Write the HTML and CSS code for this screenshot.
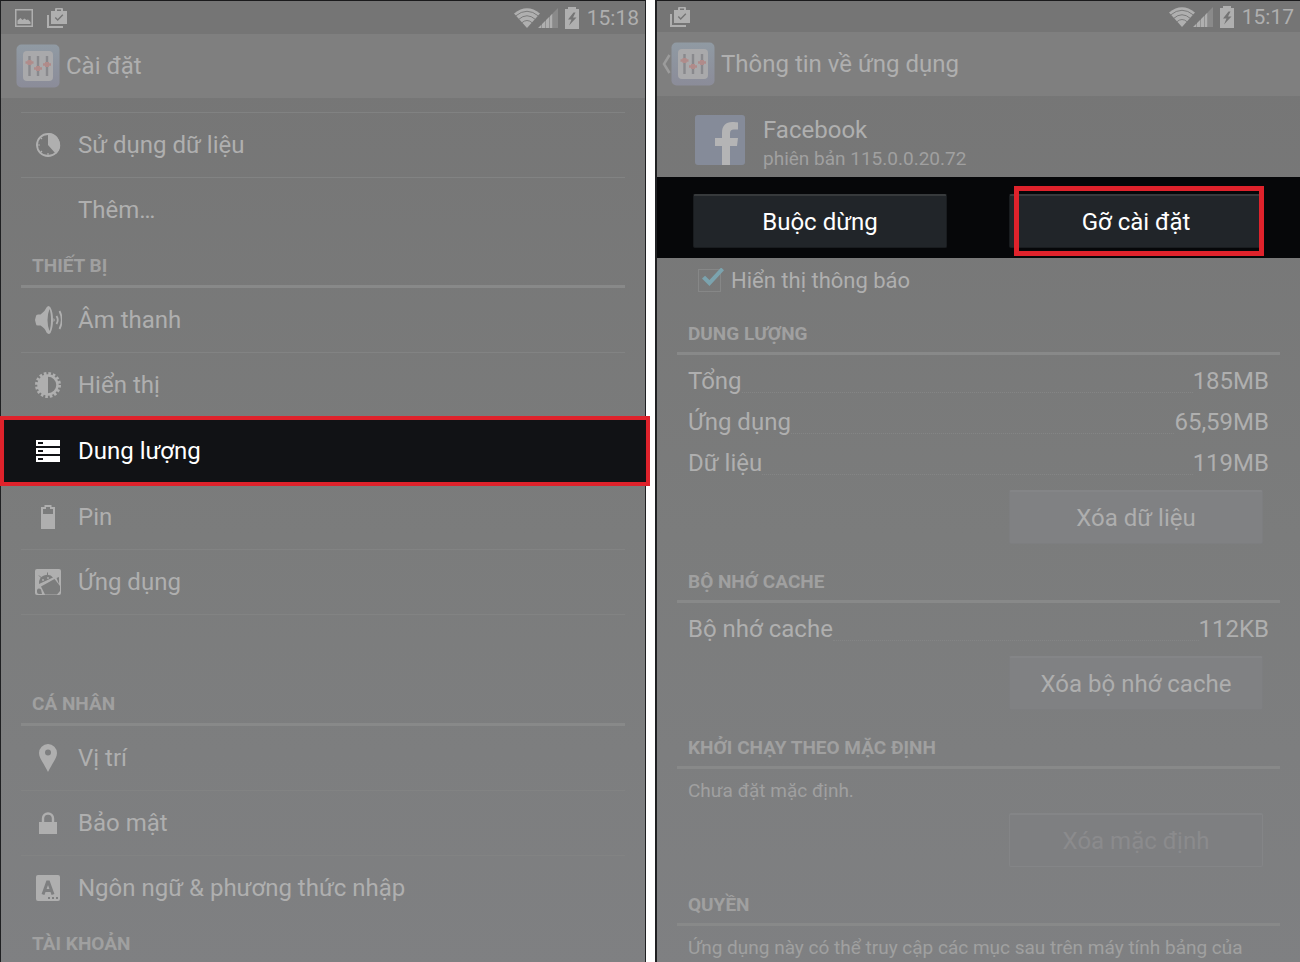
FILE: index.html
```html
<!DOCTYPE html>
<html lang="vi">
<head>
    <meta charset="utf-8">
    <title>Cài đặt</title>
    <link rel="stylesheet" href="styles.css">
</head>
<body>
    <!-- shared icons -->
    <svg class="sprite" width="0" height="0" aria-hidden="true">
        <symbol id="i-store" viewBox="0 0 22 22">
            <path fill="currentColor" d="M1 8h2v11h14v2H1z"/>
            <path fill="currentColor" fill-rule="evenodd" d="M5 4h4V2q0-1 1-1h6q1 0 1 1v2h4v13H5zM11 4h4V2.500h-4zM9.800 10l-1 1 2.900 2.900 5.600-5.700-1-1-4.600 4.700z"/>
        </symbol>
        <symbol id="i-wifi" viewBox="0 0 26 20">
            <path fill="currentColor" d="M0 5.500Q13-5 26 5.500L13 20z"/>
            <path fill="none" stroke="#757575" stroke-width=".9" d="M1.500 8Q13-1.500 24.500 8M4.500 11.500Q13 4 21.500 11.500M7.500 15Q13 10 18.500 15"/>
        </symbol>
        <symbol id="i-signal" viewBox="0 0 20 20">
            <path fill="currentColor" d="M0 20l3.500-3.500V20zM4 20v-4l3.500-3.500V20zM8 20v-8l3.500-3.500V20zM12 20V8l2.500-2.500V20z"/>
            <path fill="#8a8a8a" d="M15 20V5l5-5v20z"/>
        </symbol>
        <symbol id="i-charge" viewBox="0 0 14 22">
            <path fill="currentColor" fill-rule="evenodd" d="M0 2h3V0h8v2h3v20H0zM8.500 5.500L3 12.500h3.500L4 18.500l7.500-8H8l2.500-5z"/>
        </symbol>
        <symbol id="i-settings" viewBox="0 0 44 44">
            <linearGradient id="g-tile" x1="0" y1="0" x2="0" y2="1">
                <stop offset="0" stop-color="#909aa3"/>
                <stop offset="1" stop-color="#8b8c99"/>
            </linearGradient>
            <rect x=".5" y=".5" width="43" height="43" rx="5" fill="url(#g-tile)"/>
            <rect x="7" y="7" width="30" height="30" rx="4" fill="#a9a9ab"/>
            <path stroke="#89898d" stroke-width="2.400" d="M13.500 12v20M22 12v20M31 12v20"/>
            <path stroke="#b08b8a" stroke-width="2.400" d="M9.500 18.500h8M18 24.500h8M27 20.500h8"/>
            <path fill="#b08b8a" d="M11.500 16h4v5h-4zM20 22h4v5h-4zM29 18h4v5h-4z"/>
        </symbol>
    </svg>

    <div class="screens">
        <section class="phone phone-settings">
            <div class="status">
                <svg class="i-image" viewBox="0 0 18 18"><path fill="none" stroke="currentColor" stroke-width="1.500" d="M.75.75h16.500v16.500H.75z"/><path fill="currentColor" d="M2.500 15v-3.500l3-2.500 2 2 2-1.500 2 1.500 1.500-.5 2.500 2.500V15z"/></svg>
                <svg class="i-store"><use href="#i-store"/></svg>
                <span class="space"></span>
                <svg class="i-wifi"><use href="#i-wifi"/></svg>
                <svg class="i-signal"><use href="#i-signal"/></svg>
                <svg class="i-charge"><use href="#i-charge"/></svg>
                <time>15:18</time>
            </div>
            <header class="bar">
                <svg class="i-settings"><use href="#i-settings"/></svg>
                <h1>Cài đặt</h1>
            </header>

            <nav class="list">
                <ul class="group first">
                    <li><a href="#data">
                        <svg viewBox="0 0 28 28"><circle cx="14" cy="14" r="11" fill="none" stroke="currentColor" stroke-width="1.800"/><path fill="currentColor" d="M14 14V2a12 12 0 0 1 8 21z"/><path stroke="currentColor" stroke-width="1.200" d="M2 14h4M14 22v4M6 6l2 2M6 22l2-2"/></svg>
                        Sử dụng dữ liệu</a></li>
                    <li><a href="#more"><svg viewBox="0 0 28 28"></svg>Thêm…</a></li>
                </ul>

                <h2>THIẾT BỊ</h2>
                <ul class="group">
                    <li><a href="#sound">
                        <svg viewBox="0 0 28 28"><path fill="currentColor" fill-rule="evenodd" d="M2 10q0-1.500 2-1.500h2.500Q11 5.500 12.500 1.500q2-3 4 0Q19 6 19 14t-2.500 13q-2 2-4-.5-1.500-4.500-6-7H4q-2 0-2-1.500L1 14zM15.500 3Q13.500 8 13.500 14t2 11q1.500-4 1.500-11t-1.500-11z"/><path fill="currentColor" d="M19.500 12q2.500 2 0 4z"/><path fill="none" stroke="currentColor" stroke-width="1.800" d="M22.500 10q2.500 4 0 8M25.500 5q4.500 9 0 18"/></svg>
                        Âm thanh</a></li>
                    <li><a href="#display">
                        <svg viewBox="0 0 28 28"><circle cx="14" cy="14" r="11.500" fill="none" stroke="currentColor" stroke-width="3" stroke-dasharray="2.600 1.916"/><circle cx="14" cy="14" r="9.500" fill="none" stroke="currentColor" stroke-width="2.500"/><path fill="currentColor" d="M14 4v20a10 10 0 0 1 0-20z"/></svg>
                        Hiển thị</a></li>
                    <li class="active"><a href="#storage">
                        <svg viewBox="0 0 28 28"><path fill="currentColor" fill-rule="evenodd" d="M2 3h24v6H2zM4 5v2h5V5zM2 11h24v6H2zM4 13v2h5v-2zM2 19h24v6H2zM4 21v2h5v-2z"/></svg>
                        Dung lượng</a></li>
                    <li><a href="#battery">
                        <svg viewBox="0 0 28 28"><path fill="currentColor" fill-rule="evenodd" d="M7 4h3.500V2h7v2H21v22H7zM9 6v5h10V6h-3V4h-4v2z"/></svg>
                        Pin</a></li>
                    <li class="line"><a href="#apps">
                        <svg viewBox="0 0 28 28"><rect x="1" y="1" width="26" height="26" rx="2" fill="currentColor"/><g fill="#7c7d7d"><path d="M5 16Q4.500 9.500 10 7.500q6-2 9 2zM7 18.500L20.500 11 26 18v5l-3 3.500H11z"/><path d="M3 22q1.500-2.500 4-.5l1 4.500H5q-2 0-2-2zM22.500 10l2.500-1v7z"/></g><path stroke="#7c7d7d" stroke-width="1" d="M5 7.500L7.500 10M13.500 4.500V8"/><circle cx="9" cy="12" r=".9" fill="currentColor"/><circle cx="14" cy="10" r=".9" fill="currentColor"/></svg>
                        Ứng dụng</a></li>
                </ul>

                <h2 class="spaced">CÁ NHÂN</h2>
                <ul class="group">
                    <li><a href="#location">
                        <svg viewBox="0 0 28 28"><path fill="currentColor" fill-rule="evenodd" d="M14 0a9 9 0 0 1 9 9c0 5-4 9-9 19C9 18 5 14 5 9a9 9 0 0 1 9-9zM14 5.500a3 3 0 1 0 0 6 3 3 0 0 0 0-6z"/></svg>
                        Vị trí</a></li>
                    <li><a href="#security">
                        <svg viewBox="0 0 28 28"><path fill="currentColor" d="M5 13h18v12H5z"/><path fill="none" stroke="currentColor" stroke-width="2.400" d="M9 14V9.500a5 5 0 0 1 10 0V14"/></svg>
                        Bảo mật</a></li>
                    <li><a href="#language">
                        <svg viewBox="0 0 28 28"><rect x="2" y="1" width="24" height="26" rx="2" fill="currentColor"/><path fill="none" stroke="#7e7f80" stroke-width="3" d="M9 20.500L13.500 8h1L19 20.500M10.500 16.500h7"/><path fill="#7e7f80" d="M14 23h2v2h-2zM18 23h2v2h-2zM22 23h2v2h-2z"/></svg>
                        Ngôn ngữ &amp; phương thức nhập</a></li>
                </ul>

                <h2>TÀI KHOẢN</h2>
            </nav>
        </section>

        <section class="phone phone-app">
            <div class="status">
                <svg class="i-store"><use href="#i-store"/></svg>
                <span class="space"></span>
                <svg class="i-wifi"><use href="#i-wifi"/></svg>
                <svg class="i-signal"><use href="#i-signal"/></svg>
                <svg class="i-charge"><use href="#i-charge"/></svg>
                <time>15:17</time>
            </div>
            <header class="bar">
                <a class="back" href="#back" aria-label="Cài đặt">
                    <svg class="i-back" viewBox="0 0 10 20"><path fill="none" stroke="#9c9c9c" stroke-width="2.500" d="M8.500 1L3 10l5.500 9"/></svg>
                    <svg class="i-settings"><use href="#i-settings"/></svg>
                </a>
                <h1>Thông tin về ứng dụng</h1>
            </header>

            <div class="app">
                <svg class="app-logo" viewBox="0 0 50 50"><rect width="50" height="50" rx="3" fill="#858b99"/><path fill="#b4b4b5" d="M27 50V31h-7v-8h7v-5c0-7.500 4-11 10-11 3 0 5 .2 6 .5v7h-4c-3 0-4 1.500-4 4V23h8l-1 8h-7v19z"/></svg>
                <div class="app-text">
                    <p class="app-name">Facebook</p>
                    <p class="app-version">phiên bản 115.0.0.20.72</p>
                </div>
            </div>

            <div class="actions">
                <button type="button">Buộc dừng</button>
                <div class="marked"><button type="button">Gỡ cài đặt</button></div>
            </div>

            <div class="notify">
                <input type="checkbox" id="notify" checked>
                <label for="notify">Hiển thị thông báo</label>
            </div>

            <div class="info">
                <h2>DUNG LƯỢNG</h2>
                <dl>
                    <div><dt>Tổng</dt><dd>185MB</dd></div>
                    <div><dt>Ứng dụng</dt><dd>65,59MB</dd></div>
                    <div><dt>Dữ liệu</dt><dd>119MB</dd></div>
                </dl>
                <button type="button">Xóa dữ liệu</button>

                <h2>BỘ NHỚ CACHE</h2>
                <dl>
                    <div><dt>Bộ nhớ cache</dt><dd>112KB</dd></div>
                </dl>
                <button type="button">Xóa bộ nhớ cache</button>

                <h2>KHỞI CHẠY THEO MẶC ĐỊNH</h2>
                <p>Chưa đặt mặc định.</p>
                <button type="button" disabled>Xóa mặc định</button>

                <h2>QUYỀN</h2>
                <p>Ứng dụng này có thể truy cập các mục sau trên máy tính bảng của</p>
            </div>
        </section>
    </div>
</body>
</html>
```
FILE: styles.css
```css
* {
    box-sizing: border-box;
}

body {
    margin: 0;
    background-color: #fff;
    color: #afafaf;
    font-family: Roboto, "Noto Sans", sans-serif;
    font-size: 24px;
}

h1, h2, p, ul, dl, dd {
    margin: 0;
    padding: 0;
}

a {
    color: inherit;
    text-decoration: none;
}

svg {
    display: block;
    flex: none;
}

.sprite {
    position: absolute;
}

.screens {
    display: grid;
    grid-template-columns: 646fr 645fr;
    gap: 9px;
    height: 100vh;
    overflow: hidden;
}

.phone {
    min-width: 0;
    background-image: linear-gradient(to bottom, #757575, #7b7c7c 55%, #7f8082);
    border-top: 1px solid #1a1a1c;
}

.phone-settings {
    border-left: 1px solid #1f2022;
    border-right: 1px solid #1f2022;
}

.phone-app {
    border-left: 2px solid #1f2022;
}

/* Status bar */
.status {
    display: flex;
    align-items: center;
    height: 33px;
    padding: 0 6px 0 14px;
    background-color: #757575;
}

.phone-app .status {
    height: 31px;
    padding-left: 12px;
}

.status time {
    margin-left: 8px;
    font-size: 21px;
}

.space {
    flex: 1;
}

.i-image {
    width: 18px;
    height: 18px;
    margin-right: 13px;
}

.i-store {
    width: 22px;
    height: 22px;
}

.i-wifi {
    width: 26px;
    height: 20px;
}

.i-signal {
    width: 20px;
    height: 20px;
    margin-left: -2px;
}

.i-charge {
    width: 14px;
    height: 22px;
    margin-left: 7px;
}

/* Action bar */
.bar {
    display: flex;
    align-items: center;
    gap: 6px;
    height: 64px;
    padding-left: 15px;
    background-color: #7f7f7f;
}

.phone-app .bar {
    padding-left: 4px;
}

.bar h1 {
    font-size: 24px;
    font-weight: 400;
}

.back {
    display: flex;
    align-items: center;
}

.i-back {
    width: 10px;
    height: 20px;
}

.i-settings {
    width: 44px;
    height: 44px;
}

/* Section titles */
h2 {
    height: 44px;
    padding-left: 11px;
    border-bottom: 3px solid #888989;
    color: #a0a0a0;
    font-size: 19px;
    font-weight: 700;
    line-height: 46px;
}

/* Settings list */
.list {
    padding: 0 20px;
}

.list h2 {
    height: 45px;
}

.group {
    list-style: none;
}

.group.first {
    margin-top: 14px;
    border-top: 1px solid #818282;
}

.group li {
    position: relative;
    height: 65px;
    border-bottom: 1px solid #828383;
}

.group li:last-child:not(.line) {
    border-bottom-color: transparent;
}

.group a {
    position: relative;
    display: flex;
    align-items: center;
    gap: 16px;
    height: 100%;
    padding-left: 13px;
}

.group svg {
    width: 28px;
    height: 28px;
}

.group .active {
    height: 67px;
    color: #fff;
}

/* frame runs over both edges of the screen */
.group .active::before {
    content: "";
    position: absolute;
    inset: -2px -25px -2px -21px;
    background-color: #111215;
    border: 4px solid #df222b;
}

.spaced {
    margin-top: 66px;
}

/* App details */
.app {
    display: flex;
    align-items: center;
    gap: 18px;
    height: 81px;
    padding: 6px 38px 0;
}

.app-logo {
    width: 50px;
    height: 50px;
}

.app-text {
    padding-top: 8px;
}

.app-name {
    line-height: 30px;
}

.app-version {
    color: #a0a0a0;
    font-size: 19px;
    line-height: 28px;
}

button {
    height: 54px;
    padding: 0;
    background-color: #808183;
    border: 1px solid #7d7e80;
    border-top: 2px solid #848587;
    border-radius: 2px;
    color: #aeaeae;
    font-family: inherit;
    font-size: 24px;
}

button:disabled {
    border-color: #848587;
    background-color: #7e7f81;
    color: #8b8b8d;
}

.actions {
    display: grid;
    grid-template-columns: 1fr 1fr;
    gap: 62px;
    height: 81px;
    padding: 17px 37px 0 36px;
    background-color: #060709;
}

.actions button {
    width: 100%;
    background-color: #212529;
    border-color: #191c1f;
    border-top-color: #373a3c;
    color: #fff;
}

.marked {
    position: relative;
}

.marked::after {
    content: "";
    position: absolute;
    inset: -8px -1px 2px 5px;
    border: 5px solid #df222b;
    pointer-events: none;
}

.notify {
    display: flex;
    align-items: center;
    gap: 10px;
    height: 44px;
    padding-left: 41px;
    font-size: 22px;
}

.notify input {
    appearance: none;
    position: relative;
    width: 23px;
    height: 23px;
    margin: 0;
    border: 1px solid #868787;
}

.notify input:checked::after {
    content: "";
    position: absolute;
    inset: -2px -4px 3px 3px;
    background-color: #7ba3ae;
    clip-path: polygon(0 55%, 14% 41%, 34% 62%, 87% 0, 100% 14%, 34% 92%);
}

.info {
    padding: 0 20px;
    display: flex;
    flex-direction: column;
}

.info h2 {
    margin-top: 15px;
}

.info h2:first-child {
    margin-top: 9px;
}

.info dl {
    padding: 6px 11px;
}

.info dl div {
    display: flex;
    height: 41px;
    line-height: 41px;
}

/* dotted leader between name and value */
.info dl div::before {
    content: "";
    order: 1;
    flex: 1;
    height: 31px;
    border-bottom: 1px dotted #848585;
}

.info dd {
    order: 2;
}

.info p {
    padding: 0 11px;
    color: #a0a0a0;
    font-size: 19px;
    line-height: 44px;
    white-space: nowrap;
}

.info button {
    align-self: flex-end;
    width: 254px;
    margin-right: 17px;
}
```
